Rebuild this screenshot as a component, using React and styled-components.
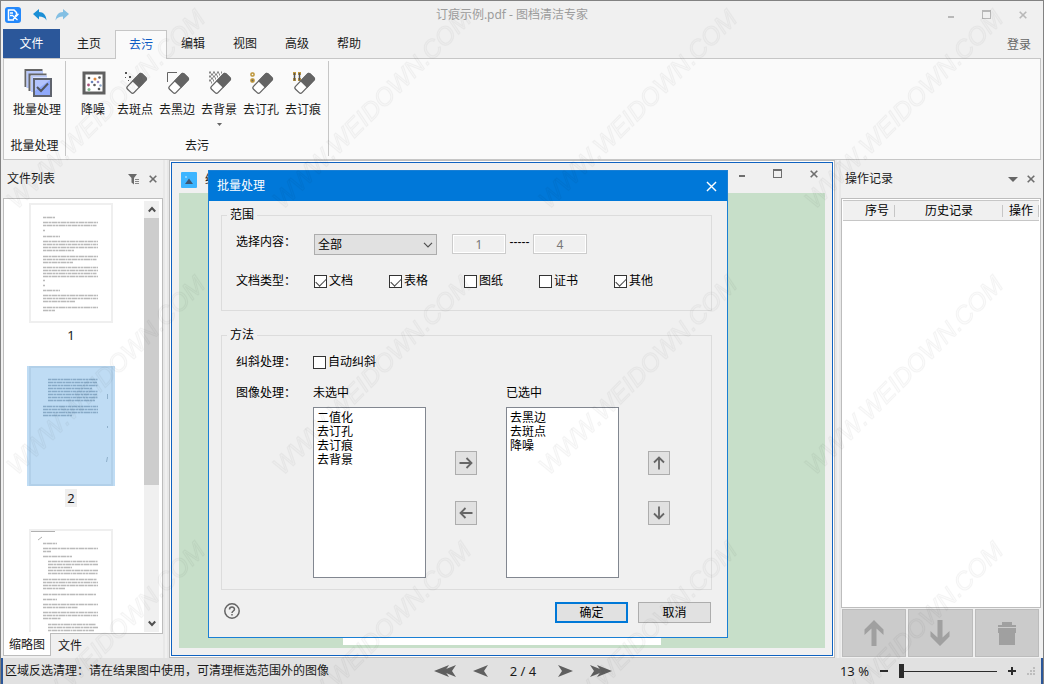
import React, { useState } from 'react';
import styled, { createGlobalStyle } from 'styled-components';

const GlobalStyle = createGlobalStyle`
    * {
        box-sizing: border-box;
    }

    body {
        margin: 0;
        background: #fff;
    }

    body, button, input, select {
        font-family: "Noto Sans", "Noto Sans CJK SC", sans-serif;
        font-size: 12px;
        line-height: 16px;
        color: #1a1a1a;
    }

    button {
        margin: 0;
        padding: 0;
        border: 0;
        background: none;
    }

    svg {
        display: block;
        flex: none;
    }
`;

// x, y and length of every printed line on the little page previews
const pages = [
    {
        id: 1,
        label: '1',
        lines: [
            [14, 13, 12], [14, 18, 55], [14, 21, 54], [14, 26, 2], [14, 32, 17],
            [14, 37, 55], [14, 40, 55], [14, 43, 55], [14, 46, 31],
            [14, 52, 55], [14, 55, 54], [14, 58, 30], [14, 63, 55], [14, 66, 55],
            [14, 69, 54], [14, 72, 55], [14, 76, 2], [14, 81, 2], [14, 86, 17],
            [14, 91, 55], [14, 94, 55], [14, 97, 32], [14, 103, 55], [14, 106, 12]
        ]
    },
    {
        id: 2,
        label: '2',
        lines: [
            [19, 12, 50], [19, 15, 49], [19, 18, 50], [19, 21, 44], [19, 24, 50],
            [19, 27, 49], [19, 30, 50], [19, 33, 47], [14, 39, 55], [14, 42, 55],
            [14, 45, 55], [14, 48, 29]
        ]
    },
    {
        id: 3,
        lines: [
            [14, 13, 14], [14, 18, 55], [14, 21, 8], [14, 26, 29], [19, 31, 50],
            [19, 34, 50], [19, 37, 24], [19, 40, 50], [19, 43, 50], [14, 49, 54],
            [14, 52, 55], [14, 55, 55], [14, 58, 22], [14, 64, 53], [14, 69, 14],
            [14, 74, 55], [14, 77, 35], [14, 82, 55], [14, 85, 55], [14, 88, 18],
            [19, 94, 48], [19, 97, 50], [19, 100, 46]
        ]
    }
];

const tabs = ['主页', '去污', '编辑', '视图', '高级', '帮助'];

const docTypes = [
    { name: '文档', on: true },
    { name: '表格', on: true },
    { name: '图纸', on: false },
    { name: '证书', on: false },
    { name: '其他', on: true }
];


/* ---------- icons ---------- */

const Logo = () => (
    <svg width="16" height="16" viewBox="0 0 16 16">
        <rect width="16" height="16" rx="3" fill="#2488fb"/>
        <path d="M9 13H3.500V3H9l2.500 2.500v2" fill="none" stroke="#fff" strokeWidth="1.500"/>
        <path d="M5 6h3M5 8.500h2M7 8l5.500 5M12.500 8L8 12.500" stroke="#fff" strokeWidth="1.300"/>
        <path d="M10 9l3.500-2" stroke="#fff" strokeWidth="1.500"/>
    </svg>
);

const Undo = ({ flip, color }) => (
    <svg width="14" height="14" viewBox="0 0 14 14">
        <path transform={flip ? 'translate(14 0) scale(-1 1)' : undefined} d="M0 6l6-5v3c4.500 0 7 3 7.500 8.500C12 9.500 9.500 8.500 6 8.500v3z" fill={color}/>
    </svg>
);

const WinMin = () => <svg width="10" height="10" viewBox="0 0 10 10"><path d="M2 6h6v2H2z" fill="currentColor"/></svg>;
const WinMax = () => (
    <svg width="10" height="10" viewBox="0 0 10 10">
        <rect x=".5" y=".5" width="8" height="8" fill="none" stroke="currentColor"/>
        <path d="M0 0h9v2H0z" fill="currentColor"/>
    </svg>
);
const Cross = ({ size = 8, weight = 1.6 }) => (
    <svg width={size} height={size} viewBox="0 0 8 8">
        <path d="M.7.7l6.600 6.600M7.300.7L.7 7.300" stroke="currentColor" strokeWidth={weight}/>
    </svg>
);

const BatchIcon = () => (
    <svg width="28" height="28" viewBox="0 0 28 28">
        <path d="M1.500 18V1h17" fill="none" stroke="#666" strokeWidth="2"/>
        <path d="M4 19V3.500h15" fill="none" stroke="#b9c9fb" strokeWidth="3"/>
        <path d="M5.500 22V5.500h17" fill="none" stroke="#666" strokeWidth="2"/>
        <path d="M8 23V7.500h15" fill="none" stroke="#b9c9fb" strokeWidth="2"/>
        <rect x="10" y="10" width="17" height="17" fill="#8fa9fb" stroke="#5f636d" strokeWidth="2"/>
        <path d="M11 11h15L11 22z" fill="#b3c4fd"/>
        <path d="M13 18l4 4 7-7.500" fill="none" stroke="#505660" strokeWidth="2"/>
    </svg>
);

const NoiseIcon = () => (
    <svg width="24" height="24" viewBox="0 0 24 24">
        <rect x="2" y="2" width="20" height="20" fill="#fff" stroke="#606060" strokeWidth="3"/>
        <g fill="#595959">
            <circle cx="7" cy="7" r="1.300"/><circle cx="17.500" cy="6.500" r="1.300"/>
            <circle cx="12.500" cy="14" r="1.300"/><circle cx="17" cy="18" r="1.300"/>
        </g>
        <circle cx="13" cy="8" r="1.500" fill="#e08a42"/>
        <circle cx="10" cy="11" r="1.300" fill="#6a85b8"/>
        <circle cx="16" cy="11" r="1.300" fill="#9a8cc0"/>
        <circle cx="6.500" cy="14" r="1.400" fill="#a8527a"/>
        <circle cx="18.500" cy="14.500" r="1.200" fill="#8aa4c8"/>
        <circle cx="7" cy="18.500" r="1.500" fill="#7fb58b"/>
    </svg>
);

const Eraser = ({ children }) => (
    <svg width="24" height="24" viewBox="0 0 24 24">
        {children}
        <g transform="translate(13 12) rotate(-46)">
            <rect x="-11" y="-4.500" width="21" height="9" rx="2" fill="#fff" stroke="#646464" strokeWidth="1.300"/>
            <path d="M-2-5H8.500Q10.500-5 10.500-3V3Q10.500 5 8.500 5H-2z" fill="#646464"/>
        </g>
    </svg>
);

const SpotIcon = () => (
    <Eraser>
        <path d="M1 1h2v2H1zM1 6h1v1H1zM5 5h2v2H5zM4 9h1v1H4z" fill="#555"/>
    </Eraser>
);
const EdgeIcon = () => <Eraser><path d="M1.500 11V1.500H11" fill="none" stroke="#646464"/></Eraser>;
const BackIcon = () => (
    <Eraser>
        {[0, 1, 2, 3, 4, 5].map(r => (
            <path key={r} d={`M${1 + (r % 2) * 2} ${1.5 + r * 2}H${14 - r * 2}`} stroke="#888" strokeWidth="2" strokeDasharray="2 2"/>
        ))}
    </Eraser>
);
const HoleIcon = () => (
    <Eraser>
        <rect x="1" y="2" width="3" height="3" rx="1" fill="none" stroke="#bd9537" strokeWidth="1.500"/>
        <rect x="1" y="8" width="3" height="3" rx="1" fill="#666" stroke="#bd9537" strokeWidth="1.500"/>
    </Eraser>
);
const StapleIcon = () => (
    <Eraser>
        <path d="M1 1h3v3H1zM6 1h3v3H6zM1 7h3v3H1zM6 7h3v3H6z" fill="#c39a3e"/>
        <path d="M2.500 2v7.500M7.500 2v7.500" stroke="#555" strokeWidth="1.500"/>
    </Eraser>
);

const tools = [
    { name: '降噪', Icon: NoiseIcon },
    { name: '去斑点', Icon: SpotIcon },
    { name: '去黑边', Icon: EdgeIcon },
    { name: '去背景', Icon: BackIcon, more: true },
    { name: '去订孔', Icon: HoleIcon },
    { name: '去订痕', Icon: StapleIcon }
];

const Triangle = ({ width, height }) => (
    <svg width={width} height={height} viewBox="0 0 10 6" preserveAspectRatio="none"><path d="M0 0h10L5 6z" fill="#666"/></svg>
);

const FilterIcon = () => (
    <svg width="12" height="12" viewBox="0 0 12 12">
        <path d="M0 1h9L6 5v6.500L3.500 9.500V5z" fill="#6a6a6a"/>
        <path d="M7 6.500h4M7 8.500h4M7 10.500h4" stroke="#888"/>
    </svg>
);

const Chevron = ({ up }) => (
    <svg width="8" height="7" viewBox="0 0 8 7">
        <path d={up ? 'M.8 5.500L4 2l3.200 3.500' : 'M.8 1.500L4 5l3.200-3.500'} fill="none" stroke="#505050" strokeWidth="2"/>
    </svg>
);

const turns = { up: 0, right: 90, down: 180, left: 270 };

const Arrow = ({ to }) => (
    <svg width="14" height="14" viewBox="0 0 14 14">
        <path transform={`rotate(${turns[to]} 7 7)`} d="M7 13.500V1.500M2 6.500l5-5 5 5" fill="none" stroke="#666" strokeWidth="1.800"/>
    </svg>
);

const BlockArrow = ({ to }) => (
    <svg width="20" height="26" viewBox="0 0 20 26">
        <path transform={`rotate(${turns[to]} 10 13)`} d="M10 0l9.500 9.500v5.500L12.500 8.500V26h-5V8.500L.5 15V9.500z" fill="#a0a0a0"/>
    </svg>
);

const TrashIcon = () => (
    <svg width="18" height="24" viewBox="0 0 18 24">
        <path d="M4 1h10v3h4v2H0V4h4zM0 7h18v5h-1v12H1V12H0z" fill="#a0a0a0"/>
    </svg>
);

const Dart = ({ double, flip }) => (
    <svg width={double ? 22 : 15} height="12" viewBox={double ? '0 0 22 12' : '0 0 15 12'}>
        <g fill="#5f5f5f" transform={flip ? `translate(${double ? 22 : 15} 0) scale(-1 1)` : undefined}>
            <path d="M0 6L15 0l-4 6 4 6z"/>
            {double && <path d="M7 6L22 0l-4 6 4 6z"/>}
        </g>
    </svg>
);

const HelpIcon = () => (
    <svg width="16" height="16" viewBox="0 0 16 16" fill="none" stroke="#646464" strokeWidth="1.500">
        <circle cx="8" cy="8" r="7.200"/>
        <path d="M5.500 6.500C5.500 3.200 10.500 3.200 10.500 6.300 10.500 8 8 8 8 10M8 11v1.500"/>
    </svg>
);

const PictureIcon = () => (
    <svg width="16" height="16" viewBox="0 0 16 16">
        <rect width="16" height="16" rx="1" fill="#3db5ff"/>
        <path d="M4 12l4-5.500 4 5.500z" fill="#3d5875"/>
        <circle cx="5" cy="5" r=".8" fill="#e8f6ff"/>
    </svg>
);

const Grip = () => (
    <svg width="9" height="9" viewBox="0 0 9 9">
        <path d="M6 0h2v2H6zM3 3h2v2H3zM6 3h2v2H6zM0 6h2v2H0zM3 6h2v2H3zM6 6h2v2H6z" fill="#bdbdbd"/>
    </svg>
);

const Preview = ({ page }) => (
    <svg width="84" height="120" viewBox="0 0 84 120">
        <rect x="1" y="1" width="82" height="118" fill={page.id === 2 ? '#bfdcf4' : '#fff'} stroke={page.id === 2 ? '#b2d0e9' : '#efefef'} strokeWidth="2"/>
        {page.lines.map(([x, y, w], i) => (
            <path key={i} d={`M${x} ${y + 1.5}h${w}`} stroke={page.id === 2 ? '#52799b' : '#777'} strokeWidth="1.500" strokeDasharray={i % 2 ? '5 .5 3 .5' : '3 .5 6 .5 2 .5'} opacity=".5"/>
        ))}
        {page.id === 2 && <path d="M78.500 28v5M78.500 60v2M78.500 91l-1 5" stroke="#8fb0cb"/>}
        {page.id === 3 && <path d="M2 2.500h24M9 11l4-3" stroke="#b0b0b0"/>}
    </svg>
);

const Watermark = () => (
    <WatermarkLayer aria-hidden="true">
        <defs>
            <pattern id="mark" width="266" height="266" patternUnits="userSpaceOnUse">
                <text transform="translate(16 209) rotate(-45)" fontFamily="Liberation Sans" fontStyle="italic" fontSize="25" fill="#000" fillOpacity=".012" stroke="#000" strokeOpacity=".035">WWW.WEIDOWN.COM</text>
            </pattern>
        </defs>
        <rect width="100%" height="100%" fill="url(#mark)"/>
    </WatermarkLayer>
);


/* ---------- batch dialog ---------- */

function BatchDialog() {

    const [types, setTypes] = useState(docTypes);

    const toggle = name => setTypes(types.map(t => t.name === name ? { ...t, on: !t.on } : t));

    return (
        <Dialog role="dialog" aria-labelledby="dialog-title">

            <DialogTitle>
                <span id="dialog-title">批量处理</span>
                <DialogClose aria-label="关闭"><Cross size={11} weight={1}/></DialogClose>
            </DialogTitle>

            <DialogBody>

                <Group>
                    <legend>范围</legend>
                    <Row $top={11} $start>
                        <FieldLabel as="label" htmlFor="content">选择内容：</FieldLabel>
                        <SelectWrap>
                            <Select id="content" defaultValue="全部"><option>全部</option></Select>
                            <SelectArrow/>
                        </SelectWrap>
                        <PageInput aria-label="起始页" defaultValue="1" disabled/>
                        <Dashes>-----</Dashes>
                        <PageInput aria-label="结束页" defaultValue="4" disabled/>
                    </Row>
                    <Row $top={18}>
                        <FieldLabel>文档类型：</FieldLabel>
                        {types.map(t => (
                            <CheckLabel key={t.name}>
                                <Check type="checkbox" checked={t.on} onChange={() => toggle(t.name)}/>{t.name}
                            </CheckLabel>
                        ))}
                    </Row>
                </Group>

                <Group $tall>
                    <legend>方法</legend>
                    <Row $top={11}>
                        <FieldLabel $narrow>纠斜处理：</FieldLabel>
                        <CheckLabel><Check type="checkbox"/>自动纠斜</CheckLabel>
                    </Row>
                    <Row $top={15} $start>
                        <FieldLabel $narrow>图像处理：</FieldLabel>
                        <Transfer>
                            <ListColumn>
                                <label htmlFor="unpicked">未选中</label>
                                <ListBox id="unpicked" multiple>
                                    {['二值化', '去订孔', '去订痕', '去背景'].map(o => <option key={o}>{o}</option>)}
                                </ListBox>
                            </ListColumn>
                            <ArrowColumn>
                                <ArrowButton aria-label="添加"><Arrow to="right"/></ArrowButton>
                                <ArrowButton aria-label="移除"><Arrow to="left"/></ArrowButton>
                            </ArrowColumn>
                            <ListColumn>
                                <label htmlFor="picked">已选中</label>
                                <ListBox id="picked" multiple>
                                    {['去黑边', '去斑点', '降噪'].map(o => <option key={o}>{o}</option>)}
                                </ListBox>
                            </ListColumn>
                            <ArrowColumn>
                                <ArrowButton aria-label="上移"><Arrow to="up"/></ArrowButton>
                                <ArrowButton aria-label="下移"><Arrow to="down"/></ArrowButton>
                            </ArrowColumn>
                        </Transfer>
                    </Row>
                </Group>

                <DialogFooter>
                    <HelpButton aria-label="帮助"><HelpIcon/></HelpButton>
                    <PushButton $primary>确定</PushButton>
                    <PushButton>取消</PushButton>
                </DialogFooter>

            </DialogBody>

        </Dialog>
    )
}


/* ---------- application ---------- */

function App() {
    return (
        <>
            <GlobalStyle/>
            <Window>

                <TitleBar>
                    <QuickBar>
                        <Logo/>
                        <button aria-label="撤销"><Undo color="#1b8fd6"/></button>
                        <button aria-label="重做"><Undo flip color="#83bfe3"/></button>
                    </QuickBar>
                    <Title>订痕示例.pdf - 图档清洁专家</Title>
                    <WinButtons $pale>
                        <button aria-label="最小化"><WinMin/></button>
                        <button aria-label="最大化"><WinMax/></button>
                        <button aria-label="关闭"><Cross/></button>
                    </WinButtons>
                </TitleBar>

                <TabRow>
                    <FileTab>文件</FileTab>
                    {tabs.map(t => <Tab key={t} $active={t === '去污'}>{t}</Tab>)}
                    <Login href="#login">登录</Login>
                </TabRow>

                <Ribbon>
                    <RibbonGroup>
                        <RibbonButtons>
                            <RibbonButton $wide><IconSlot><BatchIcon/></IconSlot>批量处理</RibbonButton>
                        </RibbonButtons>
                        <GroupName>批量处理</GroupName>
                    </RibbonGroup>
                    <RibbonGroup $wide>
                        <RibbonButtons>
                            {tools.map(({ name, Icon, more }) => (
                                <RibbonButton key={name}>
                                    <IconSlot><Icon/></IconSlot>
                                    {name}
                                    {more && <Triangle width={5} height={3}/>}
                                </RibbonButton>
                            ))}
                        </RibbonButtons>
                        <GroupName>去污</GroupName>
                    </RibbonGroup>
                </Ribbon>

                <Main>

                    <SidePanel $width={160}>
                        <PanelHeader>
                            <span>文件列表</span>
                            <button aria-label="筛选"><FilterIcon/></button>
                            <button aria-label="关闭"><Cross/></button>
                        </PanelHeader>
                        <ThumbBox>
                            <ThumbList>
                                {pages.map(p => (
                                    <Thumb key={p.id} $selected={p.id === 2}>
                                        <Preview page={p}/>
                                        {p.label && <span>{p.label}</span>}
                                    </Thumb>
                                ))}
                            </ThumbList>
                            <ScrollBar>
                                <button aria-label="向上滚动"><Chevron up/></button>
                                <ScrollThumb/>
                                <button aria-label="向下滚动"><Chevron/></button>
                            </ScrollBar>
                        </ThumbBox>
                        <BottomTabs>
                            <BottomTab $active>缩略图</BottomTab>
                            <BottomTab>文件</BottomTab>
                        </BottomTabs>
                    </SidePanel>

                    <Splitter/>

                    <DocFrame>
                        <DocWindow>
                            <DocHeader>
                                <PictureIcon/>
                                <DocName>结</DocName>
                                <WinButtons>
                                    <button aria-label="最小化"><WinMin/></button>
                                    <button aria-label="最大化"><WinMax/></button>
                                    <button aria-label="关闭"><Cross/></button>
                                </WinButtons>
                            </DocHeader>
                            <Canvas><Paper/></Canvas>
                            <BatchDialog/>
                        </DocWindow>
                    </DocFrame>

                    <Splitter/>

                    <SidePanel $width={200}>
                        <PanelHeader>
                            <span>操作记录</span>
                            <button aria-label="选项"><Triangle width={10} height={5}/></button>
                            <button aria-label="关闭"><Cross/></button>
                        </PanelHeader>
                        <HistoryBox>
                            <HistoryTable>
                                <thead>
                                    <tr>
                                        <Th $width="52px" $right>序号</Th>
                                        <Th>历史记录</Th>
                                        <Th $width="36px">操作</Th>
                                    </tr>
                                </thead>
                            </HistoryTable>
                        </HistoryBox>
                        <HistoryActions>
                            <button disabled aria-label="上移"><BlockArrow to="up"/></button>
                            <button disabled aria-label="下移"><BlockArrow to="down"/></button>
                            <button disabled aria-label="删除"><TrashIcon/></button>
                        </HistoryActions>
                    </SidePanel>

                </Main>

                <StatusBar>
                    <span>区域反选清理：请在结果图中使用，可清理框选范围外的图像</span>
                    <Pager>
                        <button aria-label="首页"><Dart double/></button>
                        <button aria-label="上一页"><Dart/></button>
                        <span>2 / 4</span>
                        <button aria-label="下一页"><Dart flip/></button>
                        <button aria-label="末页"><Dart double flip/></button>
                    </Pager>
                    <ZoomBar>
                        <span>13 %</span>
                        <button aria-label="缩小"><svg width="8" height="8" viewBox="0 0 8 8"><path d="M0 3h8v2H0z" fill="#2b2b2b"/></svg></button>
                        <ZoomRange type="range" aria-label="缩放" min="0" max="100" defaultValue="0"/>
                        <button aria-label="放大"><svg width="8" height="8" viewBox="0 0 8 8"><path d="M0 3h8v2H0zM3 0h2v8H3z" fill="#2b2b2b"/></svg></button>
                        <Grip/>
                    </ZoomBar>
                </StatusBar>

                <Watermark/>

            </Window>
        </>
    )
}

const Window = styled.div`
    position: relative;
    display: flex;
    flex-direction: column;
    height: calc(100vh - 1px);
    margin-right: 1px;
    border: 1px solid #828282;
    border-bottom: 0;
    background: #f0f0f0;
    overflow: hidden;
`;

const WatermarkLayer = styled.svg`
    position: absolute;
    inset: 0;
    width: 100%;
    height: 100%;
    z-index: 10;
    pointer-events: none;
`;

const TitleBar = styled.header`
    display: flex;
    align-items: center;
    height: 28px;
    padding: 0 2px;
`;

const QuickBar = styled.div`
    display: flex;
    align-items: center;
    gap: 8px;
    width: 88px;
    padding-left: 2px;

    > svg {
        margin-right: 4px;
    }
`;

const Title = styled.div`
    flex: 1;
    text-align: center;
    color: #9c9c9c;
`;

const WinButtons = styled.div`
    display: flex;
    color: ${props => (props.$pale ? '#b8b8b8' : '#6e6e6e')};

    button {
        display: flex;
        align-items: center;
        justify-content: center;
        width: 36px;
        height: 22px;
        color: inherit;
    }
`;

const TabRow = styled.nav`
    display: flex;
    align-items: flex-end;
    height: 29px;
    padding: 0 2px;
`;

const FileTab = styled.button`
    width: 57px;
    height: 29px;
    margin-right: 3px;
    background: #2b579a;
    color: #fff;
`;

const Tab = styled.button`
    position: relative;
    z-index: 1;
    width: 52px;
    height: 28px;

    ${props => props.$active && `
        height: 29px;
        margin-bottom: -1px;
        border: 1px solid #c6c6c6;
        border-bottom: 0;
        background: #fafafa;
        color: #0f5cc4;
    `}
`;

const Login = styled.a`
    margin-left: auto;
    padding: 0 10px 5px 0;
    color: #666;
    text-decoration: none;
`;

const Ribbon = styled.section`
    display: flex;
    height: 102px;
    margin: 0 2px;
    padding: 2px 0 3px;
    border: 1px solid #c6c6c6;
    background: #fafafa;
`;

const RibbonGroup = styled.div`
    display: flex;
    flex-direction: column;
    justify-content: space-between;
    width: ${props => (props.$wide ? 263 : 62)}px;
    border-right: 1px solid #c6c6c6;
`;

const RibbonButtons = styled.div`
    display: flex;
    justify-content: flex-end;
    padding: 8px 4px 0 0;
`;

const RibbonButton = styled.button`
    display: flex;
    flex-direction: column;
    align-items: center;
    width: ${props => (props.$wide ? 48 : 42)}px;
    white-space: nowrap;

    > svg {
        margin-top: 5px;
    }
`;

const IconSlot = styled.span`
    display: flex;
    align-items: center;
    height: 28px;
    margin-bottom: 5px;
    padding-left: 2px;
`;

const GroupName = styled.div`
    padding-bottom: 2px;
    text-align: center;
`;

const Main = styled.main`
    display: flex;
    flex: 1;
    min-height: 0;
    padding: 0 2px;
`;

const SidePanel = styled.aside`
    display: flex;
    flex: none;
    flex-direction: column;
    width: ${props => props.$width}px;
    padding-bottom: 1px;
`;

const PanelHeader = styled.div`
    display: flex;
    align-items: center;
    gap: 9px;
    height: 38px;
    padding: 0 6px 0 4px;
    color: #6e6e6e;

    span {
        flex: 1;
        color: #1a1a1a;
    }

    button {
        color: inherit;
    }
`;

const ThumbBox = styled.div`
    display: flex;
    flex: 1;
    min-height: 0;
    padding: 2px 3px 1px 0;
    border: 1px solid #bdbdbd;
    background: #fff;
`;

const ThumbList = styled.div`
    flex: 1;
    overflow: hidden;
    padding-top: 2px;
`;

const Thumb = styled.div`
    display: flex;
    flex-direction: column;
    align-items: center;
    width: 88px;
    height: 163px;
    margin-left: 23px;

    svg {
        width: 88px;
        background: ${props => (props.$selected ? '#bfdcf4' : 'none')};
    }

    span {
        margin-top: 3px;
        padding: 1px 2px;
        font-size: 13px;
        background: ${props => (props.$selected ? '#efefef' : 'none')};
    }
`;

const ScrollBar = styled.div`
    display: flex;
    flex-direction: column;
    width: 15px;
    background: #f0f0f0;

    button {
        display: flex;
        align-items: center;
        justify-content: center;
        height: 17px;
    }

    button:last-child {
        margin-top: auto;
    }
`;

const ScrollThumb = styled.div`
    height: 62%;
    background: #cdcdcd;
`;

const BottomTabs = styled.div`
    display: flex;
    height: 23px;
`;

const BottomTab = styled.button`
    padding: 0 7px;
    height: 23px;

    ${props => props.$active && `
        margin-top: -1px;
        padding: 2px 5px 0;
        border: 1px solid #bdbdbd;
        border-top: 0;
        background: #fff;
    `}
`;

const Splitter = styled.div`
    flex: none;
    width: 6px;
    background: #f0f0f0;
    border: solid #e8e8e8;
    border-width: 0 2px;
`;

const DocFrame = styled.section`
    flex: 1;
    min-width: 0;
    padding: 1px;
    border: 1px solid #bdbdbd;
    background: #fff;
`;

const DocWindow = styled.div`
    position: relative;
    display: flex;
    flex-direction: column;
    height: 100%;
    padding: 0 7px 7px;
    border: 1px solid #0f62c0;
    background: #f0f0f0;
`;

const DocHeader = styled.div`
    display: flex;
    align-items: center;
    gap: 8px;
    height: 30px;
    padding-left: 2px;
    padding-top: 4px;

    ${WinButtons} {
        align-self: flex-start;
        margin: -4px -7px 0 auto;
    }
`;

// only the first strokes show beside the dialog
const DocName = styled.span`
    width: 4px;
    overflow: hidden;
    white-space: nowrap;
`;

const Canvas = styled.div`
    display: flex;
    flex: 1;
    justify-content: center;
    padding: 3px;
    background: #c7dfc9;
`;

const Paper = styled.div`
    width: 318px;
    background: #fff;
`;

const Dialog = styled.div`
    position: absolute;
    left: 36px;
    top: 7px;
    width: 520px;
    border: 1px solid #1a7fd4;
    background: #f0f0f0;
`;

const DialogTitle = styled.div`
    display: flex;
    align-items: center;
    justify-content: space-between;
    height: 30px;
    padding: 0 10px 0 8px;
    background: #0078d9;
    color: #fff;
`;

const DialogClose = styled.button`
    color: #fff;
`;

const DialogBody = styled.div`
    padding: 6px 15px 14px 12px;
`;

const Group = styled.fieldset`
    height: ${props => (props.$tall ? 263 : 104)}px;
    margin: 0 0 ${props => (props.$tall ? 12 : 16)}px;
    padding: 0 5px;
    border: 1px solid #dcdcdc;
    color: #000;

    legend {
        padding: 0 3px;
    }
`;

const Row = styled.div`
    display: flex;
    align-items: ${props => (props.$start ? 'flex-start' : 'center')};
    margin-top: ${props => props.$top}px;
    padding-left: 9px;
`;

const FieldLabel = styled.span`
    flex: none;
    width: ${props => (props.$narrow ? 77 : 78)}px;
`;

const SelectWrap = styled.div`
    position: relative;
    margin-right: 15px;
`;

const Select = styled.select`
    display: block;
    appearance: none;
    width: 123px;
    height: 21px;
    padding: 0 3px;
    border: 1px solid #adadad;
    border-radius: 0;
    background: #e1e1e1;
    color: #000;
`;

const SelectArrow = styled(props => (
    <svg {...props} width="10" height="6" viewBox="0 0 10 6"><path d="M1 .8l4 4 4-4" fill="none" stroke="#505050" strokeWidth="1.200"/></svg>
))`
    position: absolute;
    right: 4px;
    top: 8px;
    pointer-events: none;
`;

const PageInput = styled.input`
    width: 54px;
    height: 20px;
    padding: 0;
    border: 1px solid #ccc;
    box-shadow: inset 0 0 0 1px #fff;
    background: #f0f0f0;
    color: #777;
    text-align: center;
`;

const Dashes = styled.span`
    width: 27px;
    font-family: "Liberation Sans", sans-serif;
    text-align: center;
`;

const CheckLabel = styled.label`
    display: flex;
    align-items: center;
    gap: 2px;
    width: 75px;
    white-space: nowrap;
`;

const Check = styled.input`
    appearance: none;
    flex: none;
    width: 13px;
    height: 13px;
    margin: 0;
    border: 1px solid #333;
    background: #fff;

    &:checked::after {
        content: "";
        display: block;
        width: 9px;
        height: 5px;
        margin: 2px 1px;
        border: solid #444;
        border-width: 0 0 1px 1px;
        transform: rotate(-45deg);
    }
`;

const Transfer = styled.div`
    display: flex;
    gap: 29px;
`;

const ListColumn = styled.div`
    display: flex;
    flex-direction: column;
    gap: 6px;
    width: 113px;
`;

const ListBox = styled.select`
    height: 171px;
    padding: 0;
    border: 1px solid #828790;
    border-radius: 0;
    background: #fff;
    color: #000;
    overflow: hidden;

    option {
        height: 14px;
        min-height: 14px;
        padding: 0 3px;
        line-height: 14px;
    }
`;

const ArrowColumn = styled.div`
    display: flex;
    flex-direction: column;
    gap: 26px;
    padding-top: 66px;
`;

const ArrowButton = styled.button`
    display: flex;
    align-items: center;
    justify-content: center;
    width: 22px;
    height: 24px;
    border: 1px solid #adadad;
    background: #e1e1e1;
`;

const DialogFooter = styled.div`
    display: flex;
    align-items: flex-start;
    gap: 10px;
    padding: 0 1px 0 3px;
`;

const HelpButton = styled.button`
    margin: 1px auto 0 0;
`;

const PushButton = styled.button`
    width: 73px;
    height: 21px;
    border: ${props => (props.$primary ? '2px solid #0078d7' : '1px solid #adadad')};
    background: #e1e1e1;
    color: #000;
`;

const HistoryBox = styled.div`
    flex: 1;
    padding: 1px;
    border: 1px solid #bdbdbd;
    background: #fff;
`;

const HistoryTable = styled.table`
    width: 100%;
    table-layout: fixed;
    border-collapse: collapse;
    border: solid #c6c6c6;
    border-width: 1px 0;
    background: #f0f0f0;
`;

const Th = styled.th`
    width: ${props => props.$width || 'auto'};
    height: 20px;
    padding: ${props => (props.$right ? '0 6px 0 0' : 0)};
    background: linear-gradient(#c6c6c6, #c6c6c6) right center / 1px 12px no-repeat;
    font-weight: normal;
    text-align: ${props => (props.$right ? 'right' : 'center')};
    color: #000;
`;

const HistoryActions = styled.div`
    display: flex;
    gap: 2px;
    padding: 1px 2px 0 1px;

    button {
        display: flex;
        flex: 1;
        align-items: center;
        justify-content: center;
        height: 48px;
        border: 1px solid #bcbcbc;
        background: #cbcbcb;
    }
`;

const StatusBar = styled.footer`
    display: grid;
    grid-template-columns: 1fr auto 1fr;
    align-items: center;
    height: 26px;
    margin: 0 -1px;
    padding-left: 2px;
    border: solid #2b579a;
    border-width: 0 3px;
    background: #e1e1e1;
`;

const Pager = styled.div`
    display: flex;
    align-items: center;
    gap: 17px;

    span {
        width: 36px;
        text-align: center;
        font-size: 13px;
    }
`;

const ZoomBar = styled.div`
    display: flex;
    align-items: center;
    justify-content: flex-end;
    gap: 11px;
    padding-right: 5px;

    span {
        font-size: 13px;
    }
`;

const ZoomRange = styled.input`
    appearance: none;
    width: 98px;
    height: 14px;
    margin: 0;
    background: linear-gradient(#2b2b2b, #2b2b2b) center / 100% 1px no-repeat;

    &::-webkit-slider-thumb {
        appearance: none;
        width: 5px;
        height: 14px;
        background: #2b2b2b;
    }
`;

export default App;
